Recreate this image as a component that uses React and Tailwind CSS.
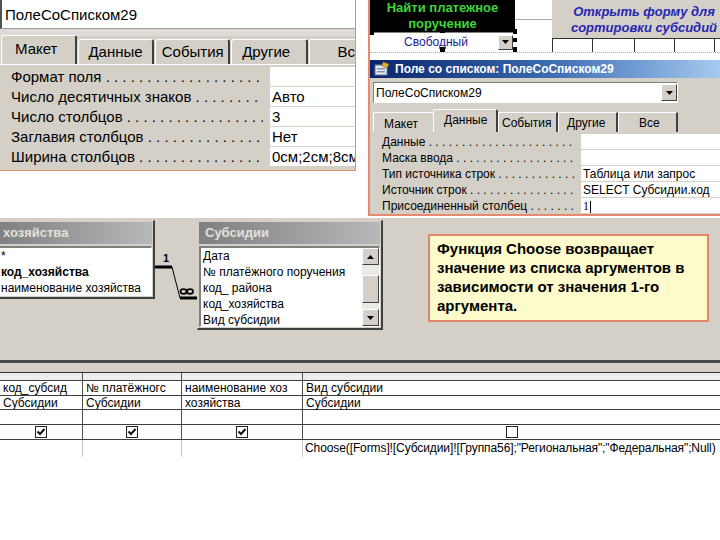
import React from 'react';

const DOTS = ' . . . . . . . . . . . . . . . . . . . . . . . . . . . . . . . . . . . . . . . . . . . .';

function Check({ checked }) {
  return (
    <svg width="12" height="12" viewBox="0 0 12 12">
      <rect x="0.5" y="0.5" width="11" height="11" fill="#fff" stroke="#222" strokeWidth="1" />
      {checked && <path d="M2.5 5.5 L5 8 L9.5 3" fill="none" stroke="#111" strokeWidth="2" />}
    </svg>
  );
}

function ArrowBtn({ w, h, up }) {
  return (
    <div className={`${w} ${h} bg-[#d4d0c8] border-t border-l border-white border-r border-b border-r-[#404040] border-b-[#404040] flex items-center justify-center shrink-0`}>
      <svg width="7" height="4" viewBox="0 0 7 4">
        {up ? <path d="M0 4 L3.5 0 L7 4 Z" fill="#000" /> : <path d="M0 0 L7 0 L3.5 4 Z" fill="#000" />}
      </svg>
    </div>
  );
}

function LeftPanel() {
  const rows = [
    ['Формат поля', ''],
    ['Число десятичных знаков', 'Авто'],
    ['Число столбцов', '3'],
    ['Заглавия столбцов', 'Нет'],
    ['Ширина столбцов', '0см;2см;8см'],
  ];
  return (
    <div className="w-[356px] h-[171px] shrink-0 bg-[#d4d0c8] border-r border-b border-[#e58a70] flex flex-col overflow-hidden text-[15px] text-black">
      <div className="h-[29px] bg-white border-l-2 border-l-[#505050] border-b border-b-[#9a9a9a] flex items-center pl-[3px] pt-[3px] whitespace-nowrap">
        ПолеСоСписком29
      </div>
      <div className="h-[7px] bg-[#dedbd6]" />
      <div className="flex items-end h-[29px] pl-[1px] border-b border-white">
        <div className="h-[29px] w-[77px] border-t border-l border-white border-r-2 border-r-[#404040] rounded-t-[3px] pl-[13px] pt-[2px] leading-[22px]">Макет</div>
        <div className="h-[25px] w-[76px] ml-[1px] border-t border-l border-white border-r-2 border-r-[#404040] rounded-t-[3px] pl-[9px] leading-[24px]">Данные</div>
        <div className="h-[25px] w-[76px] ml-[1px] border-t border-l border-white border-r-2 border-r-[#404040] rounded-t-[3px] pl-[6px] leading-[24px]">События</div>
        <div className="h-[25px] w-[77px] ml-[1px] border-t border-l border-white border-r-2 border-r-[#404040] rounded-t-[3px] pl-[10px] leading-[24px]">Другие</div>
        <div className="h-[25px] flex-1 ml-[1px] border-t border-l border-white pl-[28px] leading-[24px]">Вс</div>
      </div>
      <div className="flex flex-col pt-[2px]">
        {rows.map(([l, v]) => (
          <div key={l} className="flex h-[19px] mb-[1px]">
            <div className="w-[263px] pl-[11px] overflow-hidden whitespace-nowrap leading-[19px]">{l}{DOTS}</div>
            <div className="w-[7px]" />
            <div className="flex-1 bg-white pl-[2px] leading-[19px] whitespace-nowrap overflow-hidden">{v}</div>
          </div>
        ))}
      </div>
    </div>
  );
}

function RightPanel() {
  const rows = [
    ['Данные', ''],
    ['Маска ввода', ''],
    ['Тип источника строк', 'Таблица или запрос'],
    ['Источник строк', 'SELECT Субсидии.код'],
    ['Присоединенный столбец', '1'],
  ];
  return (
    <div className="w-[352px] h-[216px] shrink-0 border-l-2 border-b-2 border-[#e58a70] bg-white flex flex-col overflow-hidden relative">
      <div className="flex h-[52px]">
        <div className="w-[145px] flex flex-col">
          <div className="h-[32px] bg-black text-[#3fd43a] font-bold text-[13px] leading-[16px] text-center">
            Найти платежное<br />поручение
          </div>
          <div className="h-[19px] bg-white border-t border-[#808080] flex items-center">
            <div className="flex-1 text-center text-[12px] text-[#1c1c90] pl-[4px]">Свободный</div>
            <ArrowBtn w="w-[15px]" h="h-[15px]" />
            <div className="w-[2px]" />
          </div>
        </div>
        <div className="w-[37px] flex flex-col">
          <div className="h-[20px] border-b border-[#a8a8a8]" />
        </div>
        <div className="flex-1 flex flex-col">
          <div className="h-[38px] bg-[#d4d0c8] text-[#2626b4] italic font-bold text-[13px] leading-[16px] text-center pl-[16px] pt-[4px] whitespace-nowrap">
            Открыть форму для<br />сортировки субсидий
          </div>
          <div className="h-[14px] border-t border-[#303030] flex">
            <div className="w-[40px] border-l border-[#303030]" />
            <div className="w-[42px] border-l border-[#303030]" />
            <div className="w-[40px] border-l border-[#303030]" />
            <div className="w-[40px] border-l border-[#303030]" />
            <div className="flex-1 border-l border-[#303030]" />
          </div>
        </div>
      </div>
      <div className="h-[9px] border-t border-dotted border-[#b0b0b0]" />
      <div className="flex-1 bg-[#d4d0c8] flex flex-col">
        <div className="h-[18px] bg-gradient-to-r from-[#0a246a] via-[#3a6ab0] to-[#a6caf0] flex items-center pl-[4px] gap-[5px]">
          <svg width="16" height="14" viewBox="0 0 16 14">
            <rect x="1" y="3" width="12" height="10" fill="#e8e8f0" stroke="#6078a0" />
            <rect x="3" y="6" width="8" height="1.5" fill="#8090b0" />
            <rect x="3" y="9" width="8" height="1.5" fill="#8090b0" />
            <path d="M9 0 L15 2 L13 6 L8 4 Z" fill="#e0b030" stroke="#906010" strokeWidth="0.6" />
          </svg>
          <span className="text-white font-bold text-[12px] whitespace-nowrap">Поле со списком: ПолеСоСписком29</span>
        </div>
        <div className="h-[4px]" />
        <div className="ml-[3px] w-[305px] h-[21px] bg-white border-t border-l border-[#808080] border-r border-b border-r-white border-b-white flex items-center">
          <div className="flex-1 pl-[2px] text-[12px] whitespace-nowrap">ПолеСоСписком29</div>
          <ArrowBtn w="w-[16px]" h="h-[17px]" />
        </div>
        <div className="h-[6px]" />
        <div className="flex items-end h-[23px] pl-[3px] text-[12px]">
          <div className="h-[20px] w-[60px] border-t border-l border-white pl-[10px] leading-[22px]">Макет</div>
          <div className="h-[23px] w-[65px] border-t border-l border-white border-r-2 border-r-[#404040] rounded-t-[2px] pl-[10px] leading-[20px] bg-[#d4d0c8]">Данные</div>
          <div className="h-[20px] w-[60px] border-t border-l border-white border-r-2 border-r-[#404040] pl-[3px] leading-[20px]">События</div>
          <div className="h-[20px] w-[60px] border-t border-l border-white border-r-2 border-r-[#404040] pl-[8px] leading-[20px]">Другие</div>
          <div className="h-[20px] w-[60px] border-t border-l border-white border-r-2 border-r-[#404040] pl-[20px] leading-[20px]">Все</div>
        </div>
        <div className="flex flex-col pt-[2px] ml-[3px] text-[12px]">
          {rows.map(([l, v]) => (
            <div key={l} className="flex h-[16px]">
              <div className="w-[202px] pl-[9px] overflow-hidden whitespace-nowrap leading-[16px]">{l}{DOTS}</div>
              <div className="w-[6px]" />
              <div className="flex-1 bg-white border-b border-[#d4d0c8] pl-[2px] leading-[16px] whitespace-nowrap overflow-hidden">
                {v === '1' ? (<span className="font-['Liberation_Serif',serif]">1<span className="inline-block w-[1px] h-[12px] bg-black align-middle ml-[1px]" /></span>) : v}
              </div>
            </div>
          ))}
        </div>
      </div>
      <div className="absolute left-[0px] top-[31px] w-[4px] h-[4px] bg-black" />
      <div className="absolute left-[70px] top-[28px] w-[5px] h-[5px] bg-black" />
      <div className="absolute left-[70px] top-[47px] w-[5px] h-[5px] bg-black" />
      <div className="absolute left-[143px] top-[29px] w-[4px] h-[5px] bg-black" />
      <div className="absolute left-[143px] top-[38px] w-[4px] h-[4px] bg-black" />
      <div className="absolute left-[143px] top-[47px] w-[4px] h-[5px] bg-black" />
    </div>
  );
}

function TableBox({ title, items, w, h, ml, scroll }) {
  return (
    <div className={`${w} ${h} ${ml} mt-[2px] shrink-0 bg-[#d4d0c8] border border-[#d4d0c8] border-r-2 border-b-2 border-r-[#404040] border-b-[#404040] flex flex-col p-[1px]`}>
      <div className="h-[22px] bg-gradient-to-r from-[#808080] to-[#b8b8b8] flex items-center pl-[6px] text-[#e2e0dc] font-bold text-[13px] whitespace-nowrap">
        {title}
      </div>
      <div className="h-[2px]" />
      <div className="flex-1 bg-white border-t-2 border-l-2 border-[#808080] border-r border-b border-r-white border-b-white flex overflow-hidden">
        <div className="flex-1 pl-[2px] text-[12px] text-black">
          {items.map(([t, b]) => (
            <div key={t} className={`h-[16px] leading-[16px] whitespace-nowrap ${b ? 'font-bold' : ''}`}>{t}</div>
          ))}
        </div>
        {scroll && (
          <div className="w-[17px] flex flex-col bg-[#ebe9e6]">
            <ArrowBtn w="w-[17px]" h="h-[17px]" up />
            <div className="h-[10px]" />
            <div className="h-[28px] bg-[#d4d0c8] border-t border-l border-white border-r border-b border-r-[#404040] border-b-[#404040]" />
            <div className="flex-1" />
            <ArrowBtn w="w-[17px]" h="h-[17px]" />
          </div>
        )}
      </div>
    </div>
  );
}

function Middle() {
  return (
    <div className="h-[142px] bg-[#d4d0c8] flex items-start overflow-hidden">
      <TableBox
        title="хозяйства"
        w="w-[160px]"
        h="h-[79px]"
        ml="-ml-[5px]"
        items={[['*', false], ['код_хозяйства', true], ['наименование хозяйства', false]]}
      />
      <svg width="42" height="100" viewBox="0 0 42 100" className="shrink-0">
        <line x1="0" y1="49" x2="17" y2="49" stroke="#000" strokeWidth="3" />
        <line x1="17" y1="49" x2="25" y2="80" stroke="#000" strokeWidth="1" />
        <line x1="25" y1="80" x2="42" y2="80" stroke="#000" strokeWidth="3" />
        <text x="8" y="44" fontSize="11" fontWeight="bold" fontFamily="Liberation Sans, sans-serif" fill="#000">1</text>
        <ellipse cx="28.5" cy="73.5" rx="3" ry="2.3" fill="none" stroke="#000" strokeWidth="1.8" />
        <ellipse cx="35" cy="73.5" rx="3" ry="2.3" fill="none" stroke="#000" strokeWidth="1.8" />
      </svg>
      <TableBox
        title="Субсидии"
        w="w-[186px]"
        h="h-[110px]"
        ml=""
        scroll
        items={[['Дата', false], ['№ платёжного поручения', false], ['код_ района', false], ['код_хозяйства', false], ['Вид субсидии', false]]}
      />
      <div className="ml-[45px] mt-[16px] w-[281px] h-[88px] bg-[#fdfacb] border-2 border-[#e2866b] pl-[7px] pt-[3px] text-[15px] leading-[19px] font-bold text-black">
        Функция Choose возвращает значение из списка аргументов в зависимости от значения 1-го аргумента.
      </div>
    </div>
  );
}

function Grid() {
  const cols = ['w-[83px]', 'w-[99px]', 'w-[121px]'];
  const rows = [
    { h: 'h-[15px]', cells: ['код_субсид', '№ платёжногс', 'наименование хоз', 'Вид субсидии'] },
    { h: 'h-[14px]', cells: ['Субсидии', 'Субсидии', 'хозяйства', 'Субсидии'] },
    { h: 'h-[15px]', cells: ['', '', '', ''] },
  ];
  return (
    <div className="flex flex-col text-[12px] text-black">
      <div className="h-[3px] bg-[#4a4a4a]" />
      <div className="h-[9px] bg-[#d4d0c8]" />
      <div className="h-[1px] bg-[#303030]" />
      <div className="flex h-[8px] bg-[#eeeeee] border-b border-[#404040]">
        {cols.map((c, i) => <div key={i} className={`${c} border-r border-[#505050] shrink-0`} />)}
        <div className="flex-1" />
      </div>
      {rows.map((r, ri) => (
        <div key={ri} className={`flex ${r.h} border-b border-[#404040]`}>
          {cols.map((c, i) => (
            <div key={i} className={`${c} shrink-0 border-r border-[#505050] pl-[3px] overflow-hidden whitespace-nowrap leading-[15px]`}>{r.cells[i]}</div>
          ))}
          <div className="flex-1 pl-[3px] whitespace-nowrap leading-[15px]">{r.cells[3]}</div>
        </div>
      ))}
      <div className="flex h-[15px] border-b border-[#404040]">
        {cols.map((c, i) => (
          <div key={i} className={`${c} shrink-0 border-r border-[#505050] flex items-center justify-center`}><Check checked /></div>
        ))}
        <div className="flex-1 flex items-center justify-center"><Check /></div>
      </div>
      <div className="flex h-[17px]">
        {cols.map((c, i) => (
          <div key={i} className={`${c} shrink-0 border-r border-[#c8c8c8]`} />
        ))}
        <div className="flex-1 pl-[2px] whitespace-nowrap leading-[17px] text-[12px] tracking-[-0.1px]">
          Choose([Forms]![Субсидии]![Группа56];"Региональная";"Федеральная";Null)
        </div>
      </div>
    </div>
  );
}

export default function App() {
  return (
    <div className="w-[720px] h-[540px] bg-white overflow-hidden font-['Liberation_Sans',Arial,sans-serif]">
      <div className="flex h-[218px] items-start">
        <LeftPanel />
        <div className="ml-[12px]">
          <RightPanel />
        </div>
      </div>
      <Middle />
      <Grid />
    </div>
  );
}
